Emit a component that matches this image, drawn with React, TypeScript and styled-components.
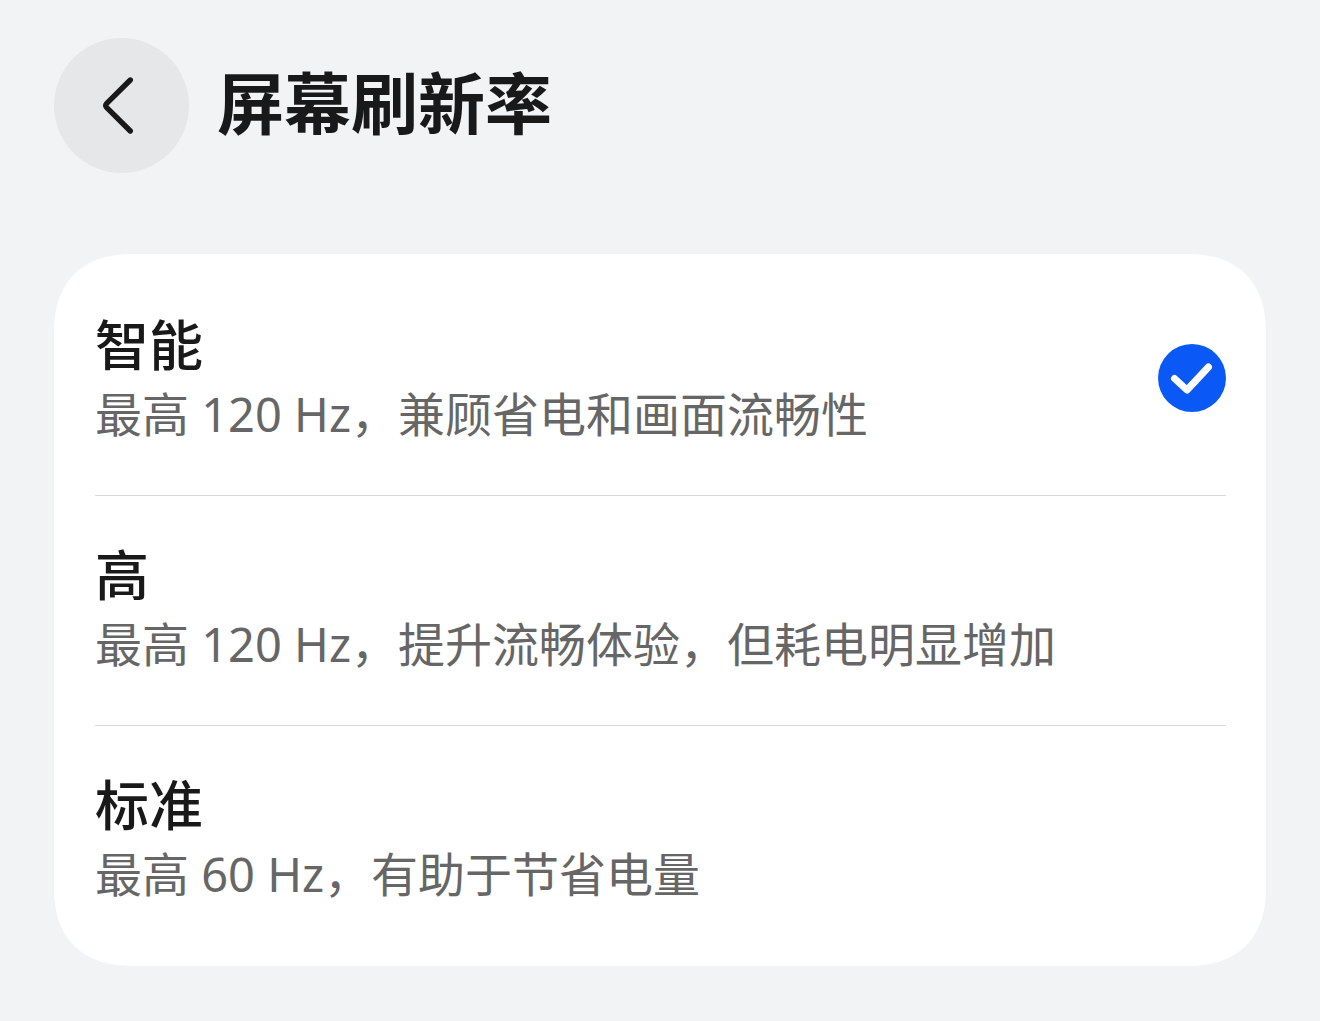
import React, { useState } from "react";
import styled, { createGlobalStyle } from "styled-components";

const GlobalStyle = createGlobalStyle`
  *, *::before, *::after { box-sizing: border-box; }
  body {
    margin: 0;
    background: #f1f3f5;
    color: #191919;
    font-family: "Noto Sans", "Noto Sans CJK SC", sans-serif;
  }
`;

const Page = styled.main`
  min-height: 100vh;
  padding: 38px 54px 55px;
  background: #f1f3f5;
`;

const Header = styled.header`
  display: flex;
  align-items: center;
  gap: 28px;
  margin-bottom: 81px;
`;

const BackButton = styled.button`
  display: flex;
  flex: none;
  align-items: center;
  justify-content: center;
  width: 135px;
  height: 135px;
  padding: 0;
  border: 0;
  border-radius: 50%;
  background: #e5e7e9;
  color: #191919;
  cursor: pointer;
`;

const Title = styled.h1`
  margin: 0;
  padding-bottom: 6px;
  font-size: 67px;
  line-height: 96px;
  font-weight: 700;
`;

const Card = styled.div`
  padding: 12px 40px 11px 41px;
  border-radius: 70px;
  background: #fff;

  @supports (corner-shape: superellipse(1.25)) {
    border-radius: 80px;
    corner-shape: superellipse(1.25);
  }
`;

const Option = styled.label`
  display: flex;
  box-sizing: content-box;
  align-items: center;
  gap: 24px;
  min-height: 224px;
  padding-bottom: 5px;
  cursor: pointer;

  & + & {
    border-top: 1px solid #d9d9d9;
  }
`;

const OptionText = styled.span`
  display: flex;
  flex: 1;
  flex-direction: column;
`;

const OptionName = styled.span`
  font-size: 54px;
  line-height: 72px;
  font-weight: 500;
`;

const OptionNote = styled.span`
  color: #666;
  font-size: 47px;
  line-height: 66px;
`;

const Radio = styled.input`
  position: absolute;
  opacity: 0;
`;

const Mark = styled.span`
  display: flex;
  flex: none;
  visibility: hidden;

  ${Radio}:checked + & {
    visibility: visible;
  }
`;

const options = [
  { id: "smart", name: "智能", note: "最高 120 Hz，兼顾省电和画面流畅性" },
  { id: "high", name: "高", note: "最高 120 Hz，提升流畅体验，但耗电明显增加" },
  { id: "standard", name: "标准", note: "最高 60 Hz，有助于节省电量" },
];

export default function App() {
  const [rate, setRate] = useState("smart");
  return (
    <Page>
      <GlobalStyle />
      <Header>
        <BackButton type="button" aria-label="返回">
          <svg width="72" height="72" viewBox="0 0 72 72" fill="none" stroke="currentColor" strokeWidth="5.4" strokeLinecap="round" strokeLinejoin="round" aria-hidden="true">
            <path d="M44.3 10 L20.5 33.7 Q19 35.5 20.5 37.3 L44.3 61" />
          </svg>
        </BackButton>
        <Title>屏幕刷新率</Title>
      </Header>
      <Card role="radiogroup" aria-label="屏幕刷新率">
        {options.map((option) => (
          <Option key={option.id}>
            <OptionText>
              <OptionName>{option.name}</OptionName>
              <OptionNote>{option.note}</OptionNote>
            </OptionText>
            <Radio type="radio" name="rate" value={option.id} checked={rate === option.id} onChange={() => setRate(option.id)} />
            <Mark>
              <svg width="68" height="68" viewBox="0 0 68 68" fill="none" aria-hidden="true">
                <circle cx="34" cy="34" r="34" fill="#0a59f7" />
                <path d="M16.5 34.5 L29 46 L50.5 23" stroke="#fff" strokeWidth="7" strokeLinecap="round" strokeLinejoin="round" />
              </svg>
            </Mark>
          </Option>
        ))}
      </Card>
    </Page>
  );
}
